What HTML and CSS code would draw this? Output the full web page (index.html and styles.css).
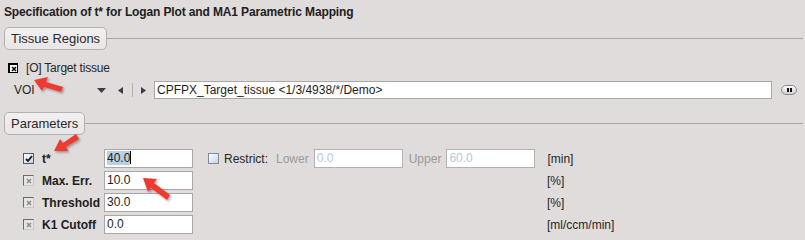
FILE: index.html
```html
<!DOCTYPE html>
<html lang="en">
<head>
  <meta charset="UTF-8" />
  <title>Specification of t*</title>
  <link rel="stylesheet" href="styles.css">
</head>
<body>
  <div class="title">Specification of t* for Logan Plot and MA1 Parametric Mapping</div>

  <div class="section">
    <div class="tab">Tissue Regions</div>
    <div class="rule"></div>
  </div>

  <div class="row target">
    <span class="cb cb-black">
      <svg width="6" height="6" viewBox="0 0 6 6"><path d="M1 1 L5 5 M5 1 L1 5" stroke="#000" stroke-width="1.5"/></svg>
    </span>
    <span class="target-label">[O] Target tissue</span>
  </div>

  <div class="row voi">
    <span class="voi-label">VOI</span>
    <svg class="ico-down" width="9" height="5" viewBox="0 0 9 5"><path d="M0 0 H9 L4.5 5 Z" fill="#3c3c4a"/></svg>
    <svg class="ico-left" width="5" height="7" viewBox="0 0 5 7"><path d="M5 0 V7 L0 3.5 Z" fill="#3c3c4a"/></svg>
    <span class="sep"></span>
    <svg class="ico-right" width="5" height="7" viewBox="0 0 5 7"><path d="M0 0 V7 L5 3.5 Z" fill="#3c3c4a"/></svg>
    <div class="field voi-field">CPFPX_Target_tissue &lt;1/3/4938/*/Demo&gt;</div>
    <span class="more"><span class="dot"></span><span class="dot"></span></span>
  </div>

  <div class="section params">
    <div class="tab">Parameters</div>
    <div class="rule"></div>
  </div>

  <div class="param">
    <span class="cb cb-on">
      <svg width="8" height="7" viewBox="0 0 8 7"><path d="M1 4 L3 6 L7 1" stroke="#1a1a1a" stroke-width="1.8" fill="none"/></svg>
    </span>
    <span class="plabel">t*</span>
    <div class="field num"><span class="sel">40.0</span><span class="caret"></span></div>
    <span class="cb cb-plain restrict-cb"></span>
    <span class="restrict">Restrict:</span>
    <span class="muted lower">Lower</span>
    <div class="field num dis">0.0</div>
    <span class="muted upper">Upper</span>
    <div class="field num dis">60.0</div>
    <span class="unit unit-first">[min]</span>
  </div>

  <div class="param">
    <span class="cb cb-off"><svg width="6" height="6" viewBox="0 0 6 6"><path d="M1 1 L5 5 M5 1 L1 5" stroke="#8a8a8a" stroke-width="1.5"/></svg></span>
    <span class="plabel">Max. Err.</span>
    <div class="field num">10.0</div>
    <span class="gap"></span>
    <span class="unit">[%]</span>
  </div>

  <div class="param">
    <span class="cb cb-off"><svg width="6" height="6" viewBox="0 0 6 6"><path d="M1 1 L5 5 M5 1 L1 5" stroke="#8a8a8a" stroke-width="1.5"/></svg></span>
    <span class="plabel">Threshold</span>
    <div class="field num">30.0</div>
    <span class="gap"></span>
    <span class="unit">[%]</span>
  </div>

  <div class="param">
    <span class="cb cb-off"><svg width="6" height="6" viewBox="0 0 6 6"><path d="M1 1 L5 5 M5 1 L1 5" stroke="#8a8a8a" stroke-width="1.5"/></svg></span>
    <span class="plabel">K1 Cutoff</span>
    <div class="field num">0.0</div>
    <span class="gap"></span>
    <span class="unit">[ml/ccm/min]</span>
  </div>

  <!-- red annotation arrows -->
  <svg class="arrows" width="805" height="240" viewBox="0 0 805 240">
    <defs>
      <filter id="sh" x="-20%" y="-20%" width="140%" height="140%">
        <feDropShadow dx="1.5" dy="1.5" stdDeviation="1.2" flood-color="#000" flood-opacity="0.35"/>
      </filter>
    </defs>
    <g fill="#ee3a32" filter="url(#sh)">
      <path d="M34 80 L48 77 L46 82 L63 87 L61 92 L44 87 L42 91 Z"/>
      <path d="M54 151 L60 139 L63 143 L76 134 L79 139 L66 147 L68 151 Z"/>
      <path d="M143 178 L157 179 L154 183 L170 195 L167 200 L151 188 L148 192 Z"/>
    </g>
  </svg>
</body>
</html>
```

FILE: styles.css
```css
* {
  box-sizing: border-box;
}
body {
  margin: 0;
  width: 805px;
  height: 240px;
  overflow: hidden;
  position: relative;
  background: #e0dcdb;
  font-family: "Liberation Sans", Arial, sans-serif;
  font-size: 12px;
  color: #262626;
}
.title {
  height: 25px;
  line-height: 24px;
  padding-left: 4px;
  font-weight: bold;
  font-size: 12px;
  letter-spacing: -0.13px;
  color: #202020;
}
.section {
  display: flex;
  align-items: center;
  height: 24px;
  margin-top: 1px;
  padding-left: 4px;
}
.tab {
  height: 23px;
  line-height: 21px;
  padding: 0 6px;
  border: 1px solid #b3b0b0;
  border-radius: 5px;
  background: linear-gradient(#f1efef, #e8e6e6);
  font-size: 13px;
  color: #2a2a2a;
}
.rule {
  flex: 1;
  height: 1px;
  margin-right: 2px;
  background: #a9a5a4;
}
.row {
  display: flex;
  align-items: center;
}
.target {
  height: 16px;
  margin-top: 10px;
  padding-left: 8px;
}
.cb {
  display: inline-flex;
  align-items: center;
  justify-content: center;
  flex: none;
}
.cb-black {
  width: 10px;
  height: 10px;
  background: #fff;
  border: 1px solid #000;
  border-top-width: 2px;
  border-left-width: 2px;
}
.target-label {
  margin-left: 8px;
  font-size: 12px;
  letter-spacing: -0.2px;
}
.voi {
  height: 18px;
  margin-top: 5px;
  padding-left: 14px;
}
.voi-label {
  width: 83px;
  font-size: 12px;
}
.ico-down {
  margin-top: 1px;
}
.ico-left {
  margin-left: 12px;
}
.sep {
  width: 1px;
  height: 14px;
  margin: 0 8px 0 9px;
  background: #b5b1b0;
}
.voi-field {
  margin-left: 8px;
  width: 618px;
  height: 18px;
  line-height: 16px;
  padding-left: 2px;
  background: #ececec;
  border: 1px solid #a6a4a4;
  font-size: 12px;
  color: #1e1e1e;
}
.more {
  display: inline-flex;
  align-items: center;
  justify-content: center;
  gap: 1px;
  width: 16px;
  height: 10px;
  margin-left: 9px;
  border: 1px solid #8c8c8c;
  border-radius: 5px;
  background: linear-gradient(#fafafa, #cfcfcf);
}
.dot {
  width: 2px;
  height: 4px;
  background: #111;
}
.params {
  margin-top: 12px;
}
.param {
  display: flex;
  align-items: center;
  height: 19px;
  margin-bottom: 3px;
  padding-left: 23px;
}
.params + .param {
  margin-top: 14px;
}
.cb-on,
.cb-off,
.cb-plain {
  width: 11px;
  height: 11px;
}
.cb-on {
  border: 1px solid #4d5b6e;
  background: linear-gradient(135deg, #ffffff, #c6d3e3);
}
.cb-off {
  border: 1px solid #6b6b6b;
  border-right-color: #c8c8c8;
  border-bottom-color: #c8c8c8;
  background: #e6e4e4;
}
.cb-plain {
  border: 1px solid #7c8a9a;
  background: linear-gradient(135deg, #fdfdfe, #c9d4e1);
}
.plabel {
  width: 70px;
  padding-left: 8px;
  font-weight: bold;
  font-size: 12px;
  color: #202020;
}
.field {
  background: #fff;
  border: 1px solid #aaa7a7;
}
.num {
  width: 89px;
  height: 19px;
  line-height: 17px;
  padding-left: 2px;
  font-size: 12px;
  color: #1e1e1e;
  flex: none;
}
.sel {
  background: #b8cfe5;
}
.caret {
  display: inline-block;
  width: 1px;
  height: 13px;
  vertical-align: -2px;
  background: #000;
}
.restrict-cb {
  margin-left: 15px;
}
.restrict {
  margin-left: 5px;
  font-size: 12px;
}
.muted {
  color: #9c9a9a;
}
.lower {
  margin-left: 8px;
  margin-right: 5px;
}
.upper {
  margin-left: 6px;
  margin-right: 5px;
}
.dis {
  color: #b7c7d9;
  border-color: #b3b0b0;
}
.gap {
  width: 345px;
  flex: none;
}
.unit {
  margin-left: 9px;
  font-size: 12px;
}
.unit-first {
  margin-left: 12px;
}
.arrows {
  position: absolute;
  left: 0;
  top: 0;
  pointer-events: none;
}
```
